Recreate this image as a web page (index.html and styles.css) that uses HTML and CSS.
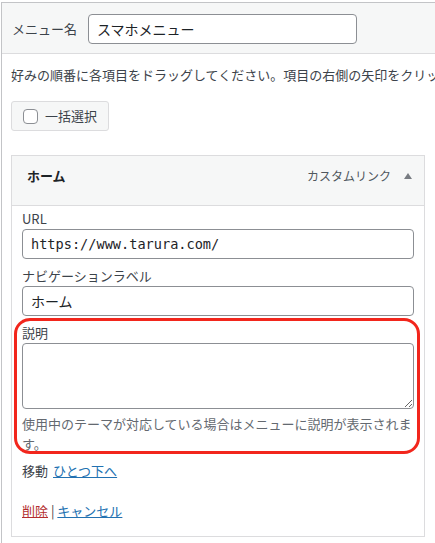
FILE: index.html
```html
<!DOCTYPE html>
<html lang="ja">
<head>
<meta charset="utf-8">
<title>メニュー編集</title>
<link rel="stylesheet" href="styles.css">
</head>
<body>
<div class="frame">
  <div class="name-bar">
    <label class="name-label" for="menu-name">メニュー名</label>
    <input id="menu-name" class="name-input" type="text" value="スマホメニュー">
  </div>
  <div class="frame-body">
    <p class="instructions">好みの順番に各項目をドラッグしてください。項目の右側の矢印をクリックすると、追加の設定オプションが表示されます。</p>
    <div class="bulk"><span class="checkbox"></span><span>一括選択</span></div>
    <div class="item">
      <div class="item-handle">
        <span class="item-title">ホーム</span>
        <span class="item-type">カスタムリンク</span>
        <svg class="arrow" width="8" height="6" viewBox="0 0 8 6"><path d="M4 0 L8 6 L0 6 Z" fill="#787c82"/></svg>
      </div>
      <div class="item-settings">
        <div class="field">
          <label class="field-label">URL</label>
          <input class="field-input mono" type="text" value="https://www.tarura.com/">
        </div>
        <div class="field">
          <label class="field-label">ナビゲーションラベル</label>
          <input class="field-input" type="text" value="ホーム">
        </div>
        <div class="field field-desc">
          <div class="highlight"></div>
          <label class="field-label">説明</label>
          <textarea class="field-textarea"></textarea>
          <p class="help">使用中のテーマが対応している場合はメニューに説明が表示されます。</p>
        </div>
        <div class="move">移動<a class="link" href="#">ひとつ下へ</a></div>
        <div class="actions"><a class="link delete" href="#">削除</a> | <a class="link" href="#">キャンセル</a></div>
      </div>
    </div>
  </div>
</div>
</body>
</html>
```
FILE: styles.css
```css
html, body {
  margin: 0;
  padding: 0;
  background: #fff;
}
body {
  font-family: "Noto Sans CJK JP", "Noto Sans", sans-serif;
  font-size: 13px;
  color: #3c434a;
  overflow: hidden;
}
.frame {
  margin: 2px 0 0 1px;
  border-top: 1px solid #c3c4c7;
  border-left: 1px solid #c3c4c7;
  min-height: 560px;
}
.name-bar {
  display: flex;
  align-items: center;
  background: #f6f7f7;
  border-bottom: 1px solid #dcdcde;
  padding: 11px 0 9px 10px;
}
.name-label {
  font-size: 13px;
  line-height: 20px;
  color: #3c434a;
  margin-right: 11px;
}
.name-input {
  box-sizing: border-box;
  width: 269px;
  height: 30px;
  border: 1px solid #8c8f94;
  border-radius: 4px;
  padding: 0 8px;
  font-family: "Noto Sans CJK JP", sans-serif;
  font-size: 14px;
  color: #1d2327;
  background: #fff;
  outline: none;
}
.frame-body {
  padding: 0 10px 0 9px;
}
.instructions {
  margin: 11px -10px 0 0;
  line-height: 20px;
  white-space: nowrap;
  overflow: hidden;
  color: #3c434a;
}
.bulk {
  box-sizing: border-box;
  margin-top: 16px;
  display: inline-flex;
  align-items: center;
  height: 30px;
  padding: 0 11px;
  border: 1px solid #dcdcde;
  border-radius: 3px;
  background: #f6f7f7;
  color: #3c434a;
  line-height: 20px;
}
.checkbox {
  box-sizing: border-box;
  width: 15px;
  height: 15px;
  border: 1px solid #8c8f94;
  border-radius: 4px;
  background: #fff;
  margin-right: 7px;
}
.item {
  margin-top: 24px;
  border: 1px solid #dcdcde;
}
.item-handle {
  display: flex;
  align-items: center;
  box-sizing: border-box;
  height: 50px;
  padding: 0 12px 10px 15px;
  background: #f6f7f7;
  border-bottom: 1px solid #dcdcde;
}
.item-title {
  flex: 1;
  font-weight: 700;
  font-size: 13px;
  line-height: 20px;
  color: #1d2327;
}
.item-type {
  font-size: 12px;
  line-height: 20px;
  color: #50575e;
  margin-right: 13px;
}
.arrow {
  display: block;
}
.item-settings {
  padding: 2px 10px 15px;
}
.field + .field {
  margin-top: 6px;
}
.field-label {
  display: block;
  line-height: 21px;
  color: #3c434a;
}
.field-input {
  display: block;
  box-sizing: border-box;
  width: 100%;
  height: 30px;
  border: 1px solid #8c8f94;
  border-radius: 4px;
  padding: 0 8px;
  font-family: "Noto Sans CJK JP", sans-serif;
  font-size: 14px;
  color: #1d2327;
  background: #fff;
  outline: none;
}
.mono {
  font-family: "DejaVu Sans Mono", monospace;
  font-size: 13.6px;
}
.field-desc {
  position: relative;
}
.highlight {
  position: absolute;
  left: -8.5px;
  right: -5.5px;
  top: -4px;
  bottom: 0;
  border: 3px solid #f2261c;
  border-radius: 16px;
  pointer-events: none;
}
.field-textarea {
  display: block;
  box-sizing: border-box;
  width: 100%;
  height: 66px;
  margin: 0;
  border: 1px solid #8c8f94;
  border-radius: 4px;
  background: #fff;
  resize: vertical;
  outline: none;
}
.help {
  margin: 5px 0 0;
  line-height: 20px;
  color: #646970;
}
.move {
  margin-top: 7px;
  line-height: 20px;
  color: #3c434a;
}
.move .link {
  margin-left: 5px;
}
.link {
  color: #2271b1;
  text-decoration: underline;
}
.delete {
  color: #b32d2e;
}
.actions {
  margin-top: 20px;
  line-height: 20px;
  color: #3c434a;
}
```
